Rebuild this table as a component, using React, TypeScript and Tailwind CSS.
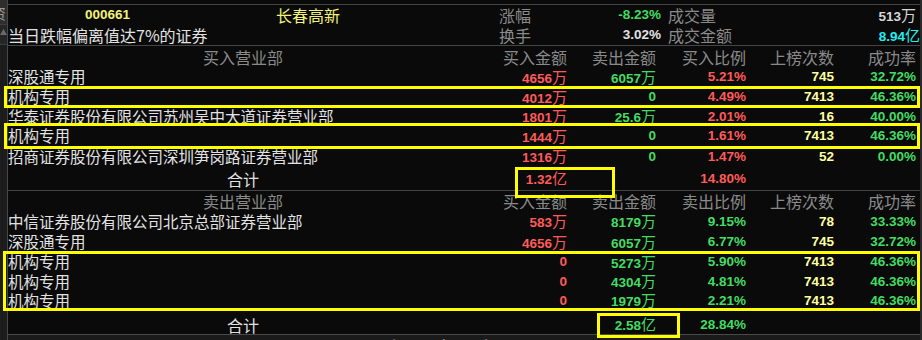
type Row = {
  name: string;
  buy: string;
  buyC: string;
  sell: string;
  sellC: string;
  ratio: string;
  ratioC: string;
  times: string;
  rate: string;
  h: string;
};

const RED = "text-[#ff5a5a]";
const GREEN = "text-[#42dc62]";

const buyRows: Row[] = [
  { name: "深股通专用", buy: "4656万", buyC: RED, sell: "6057万", sellC: GREEN, ratio: "5.21%", ratioC: RED, times: "745", rate: "32.72%", h: "h-[20px]" },
  { name: "机构专用", buy: "4012万", buyC: RED, sell: "0", sellC: GREEN, ratio: "4.49%", ratioC: RED, times: "7413", rate: "46.36%", h: "h-[20px]" },
  { name: "华泰证券股份有限公司苏州吴中大道证券营业部", buy: "1801万", buyC: RED, sell: "25.6万", sellC: GREEN, ratio: "2.01%", ratioC: RED, times: "16", rate: "40.00%", h: "h-[19px]" },
  { name: "机构专用", buy: "1444万", buyC: RED, sell: "0", sellC: GREEN, ratio: "1.61%", ratioC: RED, times: "7413", rate: "46.36%", h: "h-[20px]" },
  { name: "招商证券股份有限公司深圳笋岗路证券营业部", buy: "1316万", buyC: RED, sell: "0", sellC: GREEN, ratio: "1.47%", ratioC: RED, times: "52", rate: "0.00%", h: "h-[21px]" },
];

const sellRows: Row[] = [
  { name: "中信证券股份有限公司北京总部证券营业部", buy: "583万", buyC: RED, sell: "8179万", sellC: GREEN, ratio: "9.15%", ratioC: GREEN, times: "78", rate: "33.33%", h: "h-[21px]" },
  { name: "深股通专用", buy: "4656万", buyC: RED, sell: "6057万", sellC: GREEN, ratio: "6.77%", ratioC: GREEN, times: "745", rate: "32.72%", h: "h-[20px]" },
  { name: "机构专用", buy: "0", buyC: RED, sell: "5273万", sellC: GREEN, ratio: "5.90%", ratioC: GREEN, times: "7413", rate: "46.36%", h: "h-[20px]" },
  { name: "机构专用", buy: "0", buyC: RED, sell: "4304万", sellC: GREEN, ratio: "4.81%", ratioC: GREEN, times: "7413", rate: "46.36%", h: "h-[19px]" },
  { name: "机构专用", buy: "0", buyC: RED, sell: "1979万", sellC: GREEN, ratio: "2.21%", ratioC: GREEN, times: "7413", rate: "46.36%", h: "h-[19px]" },
];

// digits in a bold latin face, trailing 万/亿 in the CJK face
function Num({ v, c }: { v: string; c: string }) {
  const unit = /[万亿]$/.test(v) ? v.slice(-1) : "";
  const n = unit ? v.slice(0, -1) : v;
  return (
    <span className={`${c} flex items-baseline leading-none`}>
      <span className="font-['Liberation_Sans',sans-serif] text-[13.5px] font-bold">{n}</span>
      {unit && <span className="text-[15px]">{unit}</span>}
    </span>
  );
}

function Header({ title, ratio }: { title: string; ratio: string }) {
  const cols = ["买入金额", "卖出金额", ratio, "上榜次数", "成功率"];
  const widths = ["w-[89px]", "w-[89px]", "w-[90px]", "w-[88px]", "w-[82px]"];
  return (
    <div className="flex items-center text-[16px] leading-none text-[#8a8a8a]">
      <div className="w-[470px] text-center">{title}</div>
      {cols.map((c, i) => (
        <div key={i} className={`${widths[i]} text-right`}>
          {c}
        </div>
      ))}
    </div>
  );
}

function DataRow({ r }: { r: Row }) {
  return (
    <div className={`flex items-center ${r.h}`}>
      <div className="w-[470px] whitespace-nowrap text-[15.5px] leading-none text-[#e2e2e2]">{r.name}</div>
      <div className="flex w-[89px] justify-end"><Num v={r.buy} c={r.buyC} /></div>
      <div className="flex w-[89px] justify-end"><Num v={r.sell} c={r.sellC} /></div>
      <div className="flex w-[90px] justify-end"><Num v={r.ratio} c={r.ratioC} /></div>
      <div className="flex w-[88px] justify-end"><Num v={r.times} c="text-[#ffffa0]" /></div>
      <div className="flex w-[82px] justify-end"><Num v={r.rate} c={GREEN} /></div>
    </div>
  );
}

function TotalRow({ buy, sell, ratio, c, h }: { buy: string; sell: string; ratio: string; c: string; h: string }) {
  return (
    <div className={`flex items-center ${h}`}>
      <div className="w-[470px] text-center text-[16px] leading-none text-[#e2e2e2]">合计</div>
      <div className="flex w-[89px] justify-end">{buy && <Num v={buy} c={c} />}</div>
      <div className="flex w-[89px] justify-end">{sell && <Num v={sell} c={c} />}</div>
      <div className="flex w-[90px] justify-end"><Num v={ratio} c={c} /></div>
    </div>
  );
}

function LeftStrip() {
  return (
    <div className="flex w-[8px] flex-col border-r border-[#464646] bg-[#1c1c1c]">
      <div className="h-[24px] overflow-hidden bg-[#2e2e2e] pt-[5px]">
        <span className="-ml-[9px] block text-[15px] leading-none text-[#9a9a9a]">资</span>
      </div>
      <div className="h-[21px] border-t border-b border-[#3e3e3e] bg-[#262626] pt-[4px]">
        <svg width="7" height="6" viewBox="0 0 7 6">
          <path d="M0 6 L3.5 0 L7 6 Z" fill="#6a6a6a" />
        </svg>
      </div>
    </div>
  );
}

export default function App() {
  return (
    <div className="relative flex h-[340px] w-[922px] overflow-hidden bg-[#0a0a0a] font-['Noto_Sans_CJK_SC',sans-serif]">
      <LeftStrip />
      <div className="flex w-[912px] flex-col pt-[4px]">
        <div className="h-px bg-[#454545]" />

        {/* stock summary */}
        <div className="flex h-[20px] items-center leading-none">
          <div className="flex w-[491px] items-center pl-[77px]">
            <span className="w-[191px] font-['Liberation_Sans',sans-serif] text-[13.5px] font-bold text-[#f2f27c]">000661</span>
            <span className="text-[16px] text-[#f2f27c]">长春高新</span>
          </div>
          <div className="flex w-[162px] items-center justify-between">
            <span className="text-[16px] text-[#8a8a8a]">涨幅</span>
            <Num v="-8.23%" c={GREEN} />
          </div>
          <div className="ml-[7px] flex w-[248px] items-center justify-between">
            <span className="text-[16px] text-[#8a8a8a]">成交量</span>
            <Num v="513万" c="text-[#d6d6d6]" />
          </div>
        </div>
        <div className="flex h-[20px] items-center leading-none">
          <div className="w-[491px] text-[16px] text-[#e2e2e2]">当日跌幅偏离值达7%的证券</div>
          <div className="flex w-[162px] items-center justify-between">
            <span className="text-[16px] text-[#8a8a8a]">换手</span>
            <Num v="3.02%" c="text-[#e2e2e2]" />
          </div>
          <div className="ml-[7px] flex w-[252px] items-center justify-between">
            <span className="text-[16px] text-[#8a8a8a]">成交金额</span>
            <Num v="8.94亿" c="text-[#22eef0]" />
          </div>
        </div>
        <div className="h-px bg-[#454545]" />

        {/* buy side */}
        <div className="flex h-[21px] items-center">
          <Header title="买入营业部" ratio="买入比例" />
        </div>
        {buyRows.map((r, i) => (
          <DataRow key={i} r={r} />
        ))}
        <TotalRow buy="1.32亿" sell="" ratio="14.80%" c={RED} h="h-[23px]" />
        <div className="h-px bg-[#454545]" />

        {/* sell side */}
        <div className="flex h-[20px] items-center">
          <Header title="卖出营业部" ratio="卖出比例" />
        </div>
        {sellRows.map((r, i) => (
          <DataRow key={i} r={r} />
        ))}
        <div className="pt-[5px]">
          <TotalRow buy="" sell="2.58亿" ratio="28.84%" c={GREEN} h="h-[19px]" />
        </div>
        <div className="h-px bg-[#4a4a4a]" />
        <div className="h-[5px] overflow-hidden bg-[#1a1a1a] pl-[384px] pt-[3px]">
          <span className="block whitespace-nowrap text-[15px] leading-none text-[#b0b0b0]">深股通专用明细</span>
        </div>
      </div>
      <div className="w-[2px] bg-[#2a2a2a]" />

      {/* highlight boxes drawn over the table */}
      <div className="absolute left-[4px] top-[86px] h-[22px] w-[916px] border-[3px] border-[#ffff00]" />
      <div className="absolute left-[4px] top-[123px] h-[26px] w-[916px] border-[3px] border-[#ffff00]" />
      <div className="absolute left-[3px] top-[251px] h-[60px] w-[917px] border-[3px] border-[#ffff00]" />
      <div className="absolute left-[515px] top-[167px] h-[31px] w-[100px] border-[3px] border-[#ffff00]" />
      <div className="absolute left-[597px] top-[313px] h-[25px] w-[83px] border-[3px] border-[#ffff00]" />
    </div>
  );
}
